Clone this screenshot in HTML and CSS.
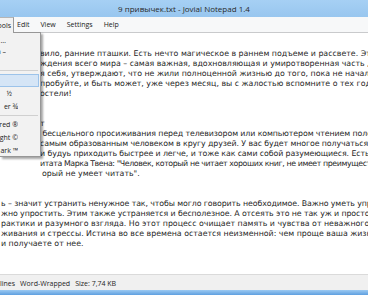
FILE: index.html
```html
<!DOCTYPE html>
<html lang="ru">
<head>
<meta charset="utf-8">
<title>Jovial Notepad</title>
<link rel="stylesheet" href="styles.css">
</head>
<body>
<div class="window">
  <div class="titlebar"><span class="title">9 привычек.txt - Jovial Notepad 1.4</span></div>
  <div class="menubar">
    <span class="menu open"><span class="clip">Tools</span></span>
    <span class="menu first">Edit</span>
    <span class="menu">View</span>
    <span class="menu">Settings</span>
    <span class="menu">Help</span>
    <div class="dropdown">
      <div class="dd-item h12">Ellipsis …</div>
      <div class="dd-item h11">Dash –</div>
      <div class="dd-item h10"></div>
      <div class="dd-sep"></div>
      <div class="dd-item hot"></div>
      <div class="dd-item"><span class="pad">½</span></div>
      <div class="dd-item">er ¾</div>
      <div class="dd-sep small"></div>
      <div class="dd-item">red ®</div>
      <div class="dd-item">ght ©</div>
      <div class="dd-item">ark ™</div>
    </div>
  </div>
  <div class="editor">
    <div class="line in">вило, ранние пташки. Есть нечто магическое в раннем подъеме и рассвете. Это</div>
    <div class="line in">ждения всего мира – самая важная, вдохновляющая и умиротворенная часть дня</div>
    <div class="line in">я себя, утверждают, что не жили полноценной жизнью до того, пока не начали</div>
    <div class="line in">пробуйте, и быть может, уже через месяц, вы с жалостью вспомните о тех годах</div>
    <div class="line in">остели!</div>
    <div class="line"> </div>
    <div class="line"> </div>
    <div class="line in">т</div>
    <div class="line in snug"> бесцельного просиживания перед телевизором или компьютером чтением полезных</div>
    <div class="line in snug">самым образованным человеком в кругу друзей. У вас будет многое получаться</div>
    <div class="line in snug">и будуь приходить быстрее и легче, и тоже как сами собой разумеющиеся. Есть</div>
    <div class="line in tight">итата Марка Твена: "Человек, который не читает хороших книг, не имеет преимуществ перед</div>
    <div class="line in2">орый не умеет читать".</div>
    <div class="line"> </div>
    <div class="line"> </div>
    <div class="line out snug">ь – значит устранить ненужное так, чтобы могло говорить необходимое. Важно уметь упрощать</div>
    <div class="line out snug">жно упростить. Этим также устраняется и бесполезное. А отсеять это не так уж и просто</div>
    <div class="line out">рактики и разумного взгляда. Но этот процесс очищает память и чувства от неважного,</div>
    <div class="line out">живания и стрессы. Истина во все времена остается неизменной: чем проще ваша жизнь</div>
    <div class="line out">и получаете от нее.</div>
  </div>
  <div class="statusbar">
    <span class="st">lines</span>
    <span class="st">Word-Wrapped</span>
    <span class="st">Size: 7,74 KB</span>
  </div>
  <div class="taskbar"></div>
</div>
</body>
</html>
```

FILE: styles.css
```css
html, body {
  margin: 0;
  padding: 0;
}
body {
  width: 368px;
  height: 295px;
  overflow: hidden;
  background: #ffffff;
}
.window {
  width: 368px;
  height: 295px;
  display: flex;
  flex-direction: column;
  overflow: hidden;
}
.titlebar {
  height: 17px;
  flex: 0 0 17px;
  display: flex;
  align-items: center;
  justify-content: center;
  background: linear-gradient(#a6d0f4, #98c6ef);
}
.title {
  font-family: "Open Sans", "Liberation Sans", sans-serif;
  font-size: 8px;
  color: #2a2a2a;
  white-space: nowrap;
}
.menubar {
  position: relative;
  height: 15px;
  flex: 0 0 15px;
  display: flex;
  align-items: stretch;
  gap: 11px;
  background: #f7f8f9;
  border-bottom: 1px solid #c9cacc;
  font-family: "Open Sans", "Liberation Sans", sans-serif;
  font-size: 7px;
  color: #1a1a1a;
}
.menu {
  display: flex;
  align-items: center;
  white-space: nowrap;
}
.menu.open {
  width: 14px;
  box-sizing: border-box;
  justify-content: flex-end;
  padding-right: 2px;
  overflow: hidden;
  background: #f2f2f2;
  border-right: 1px solid #9a9a9a;
  border-top: 1px solid #b5b5b5;
  margin-bottom: -1px;
  position: relative;
  z-index: 3;
}
.menu.first {
  margin-left: -8px;
}
.clip {
  flex: none;
}
.dropdown {
  position: absolute;
  left: 0;
  top: 15px;
  width: 41px;
  height: 125px;
  box-sizing: border-box;
  padding-top: 1px;
  background: #f2f2f2;
  border: 1px solid #979797;
  border-left: none;
  box-shadow: 2px 2px 2px rgba(0, 0, 0, 0.35);
  z-index: 2;
  display: flex;
  flex-direction: column;
  font-size: 7px;
  color: #1a1a1a;
}
.dd-item {
  height: 13px;
  flex: 0 0 13px;
  line-height: 13px;
  white-space: nowrap;
  overflow: hidden;
  display: flex;
  justify-content: flex-end;
  align-items: center;
  width: 18px;
}
.dd-item.h12 { height: 12px; flex-basis: 12px; width: 6px; }
.dd-item.h11 { height: 11px; flex-basis: 11px; width: 6px; }
.dd-item.h10 { height: 10px; flex-basis: 10px; }
.dd-item.hot {
  width: auto;
  margin: 0 1px 0 0;
  box-sizing: border-box;
  background: #d5e5f6;
  border: 1px solid #9cc3ea;
  border-left: none;
}
.pad {
  margin-right: 6px;
}
.dd-sep {
  height: 7px;
  flex: 0 0 7px;
  display: flex;
  align-items: center;
}
.dd-sep::after {
  content: "";
  display: block;
  width: 100%;
  height: 1px;
  margin-right: 2px;
  background: #d0d0d0;
}
.dd-sep.small {
  height: 5px;
  flex-basis: 5px;
}
.editor {
  flex: 1 1 auto;
  overflow: hidden;
  background: #ffffff;
  padding-top: 16px;
  font-family: "DejaVu Sans", Verdana, sans-serif;
  font-size: 7.85px;
  color: #262626;
}
.line {
  height: 10px;
  line-height: 10px;
  white-space: pre;
  overflow: hidden;
}
.line.in { padding-left: 40px; }
.line.in2 { padding-left: 42px; }
.line.out { padding-left: 1px; }
.line.snug { letter-spacing: -0.1px; }
.line.tight { letter-spacing: -0.4px; }
.statusbar {
  height: 16px;
  flex: 0 0 16px;
  box-sizing: border-box;
  display: flex;
  align-items: center;
  padding-top: 2px;
  background: #f0f0f0;
  border-top: 1px solid #dadada;
  font-family: "Open Sans", "Liberation Sans", sans-serif;
  font-size: 7px;
  color: #1e1e1e;
  gap: 5px;
}
.taskbar {
  height: 5px;
  flex: 0 0 5px;
  background: linear-gradient(#9ccaf2, #5e9fe0);
}
```
